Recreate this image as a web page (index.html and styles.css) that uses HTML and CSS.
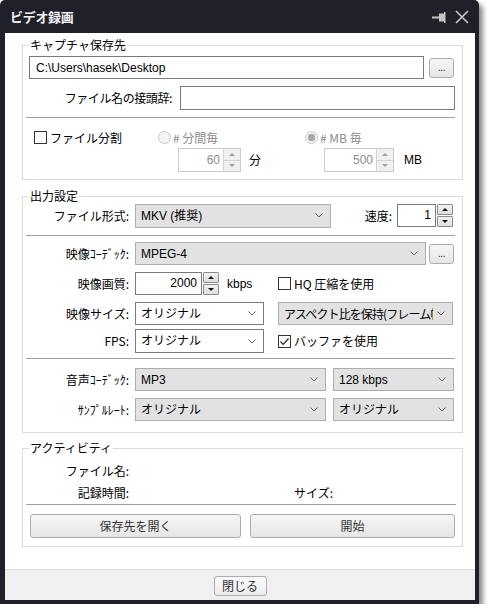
FILE: index.html
```html
<!DOCTYPE html>
<html lang="ja">
<head>
<meta charset="utf-8">
<title>ビデオ録画</title>
<link rel="stylesheet" href="styles.css">
</head>
<body>
<div class="window">
  <div class="titlebar">
    <span class="title">ビデオ録画</span>
    <div class="tb-icons">
      <svg class="pin" width="15" height="11" viewBox="0 0 15 11"><rect x="0" y="4.5" width="8" height="2" fill="#c4c4c4"/><rect x="7" y="1.5" width="5" height="8" fill="#c4c4c4"/><rect x="12" y="0" width="1.5" height="11" fill="#c4c4c4"/></svg>
      <svg class="xbtn" width="14" height="14" viewBox="0 0 14 14"><path d="M1 1 L13 13 M13 1 L1 13" stroke="#c8c8c8" stroke-width="1.6" fill="none"/></svg>
    </div>
  </div>
  <div class="client">
    <div class="group g1">
      <span class="legend">キャプチャ保存先</span>
      <div class="row r-path">
        <div class="textbox path">C:\Users\hasek\Desktop</div>
        <div class="btn dots">...</div>
      </div>
      <div class="row r-prefix">
        <span class="lbl-inline">ファイル名の接頭辞:</span>
        <div class="textbox prefix"></div>
      </div>
      <div class="sep"></div>
      <div class="row r-split">
        <div class="chk split"><span class="box"></span>ファイル分割</div>
        <div class="radio rmin"><span class="circ"></span># 分間毎</div>
        <div class="radio rmb"><span class="circ on"></span># MB 毎</div>
      </div>
      <div class="row r-spin">
        <div class="spinwrap">
          <div class="spin dis w60"><span class="val">60</span><span class="arrows"><span class="a up"><i class="tri-up"></i></span><span class="a dn"><i class="tri-dn"></i></span></span></div>
          <span class="unit">分</span>
        </div>
        <div class="spin dis w500"><span class="val">500</span><span class="arrows"><span class="a up"><i class="tri-up"></i></span><span class="a dn"><i class="tri-dn"></i></span></span></div>
        <span class="unit mb">MB</span>
      </div>
    </div>

    <div class="group g2">
      <span class="legend">出力設定</span>
      <div class="row r-fmt">
        <span class="lbl">ファイル形式:</span>
        <div class="combo gray w-fmt"><span class="ctext">MKV (推奨)</span><svg class="chev" width="8" height="5" viewBox="0 0 8 5"><polyline points="0.5,0.5 4,4 7.5,0.5" fill="none" stroke="#666" stroke-width="1"/></svg></div>
        <span class="speed-lbl">速度:</span>
        <div class="espin w-speed"><div class="etext">1</div><div class="earrows"><span class="eb"><i class="tri-up dark"></i></span><span class="eb"><i class="tri-dn dark"></i></span></div></div>
      </div>
      <div class="sep"></div>
      <div class="row r-codec">
        <span class="lbl">映像ｺｰﾃﾞｯｸ:</span>
        <div class="combo gray w-codec"><span class="ctext">MPEG-4</span><svg class="chev" width="8" height="5" viewBox="0 0 8 5"><polyline points="0.5,0.5 4,4 7.5,0.5" fill="none" stroke="#666" stroke-width="1"/></svg></div>
        <div class="btn dots codec-dots">...</div>
      </div>
      <div class="row r-quality">
        <span class="lbl">映像画質:</span>
        <div class="c1">
          <div class="espin w-q"><div class="etext">2000</div><div class="earrows"><span class="eb"><i class="tri-up dark"></i></span><span class="eb"><i class="tri-dn dark"></i></span></div></div>
          <span class="kbps">kbps</span>
        </div>
        <div class="chk"><span class="box"></span>HQ 圧縮を使用</div>
      </div>
      <div class="row r-size">
        <span class="lbl">映像サイズ:</span>
        <div class="combo white w-size"><span class="ctext">オリジナル</span><svg class="chev" width="8" height="5" viewBox="0 0 8 5"><polyline points="0.5,0.5 4,4 7.5,0.5" fill="none" stroke="#666" stroke-width="1"/></svg></div>
        <div class="combo gray w-aspect"><span class="ctext">アスペクト比を保持(フレーム幅</span><svg class="chev" width="8" height="5" viewBox="0 0 8 5"><polyline points="0.5,0.5 4,4 7.5,0.5" fill="none" stroke="#666" stroke-width="1"/></svg></div>
      </div>
      <div class="row r-fps">
        <span class="lbl">FPS:</span>
        <div class="combo white w-size"><span class="ctext">オリジナル</span><svg class="chev" width="8" height="5" viewBox="0 0 8 5"><polyline points="0.5,0.5 4,4 7.5,0.5" fill="none" stroke="#666" stroke-width="1"/></svg></div>
        <div class="chk buf"><span class="box checked"><svg width="11" height="11" viewBox="0 0 11 11"><polyline points="1.5,5.5 4.2,8.3 9.5,2.5" fill="none" stroke="#222" stroke-width="1.2"/></svg></span>バッファを使用</div>
      </div>
      <div class="sep s2"></div>
      <div class="row r-audio">
        <span class="lbl">音声ｺｰﾃﾞｯｸ:</span>
        <div class="combo gray w-audio"><span class="ctext">MP3</span><svg class="chev" width="8" height="5" viewBox="0 0 8 5"><polyline points="0.5,0.5 4,4 7.5,0.5" fill="none" stroke="#666" stroke-width="1"/></svg></div>
        <div class="combo gray w-rate"><span class="ctext">128 kbps</span><svg class="chev" width="8" height="5" viewBox="0 0 8 5"><polyline points="0.5,0.5 4,4 7.5,0.5" fill="none" stroke="#666" stroke-width="1"/></svg></div>
      </div>
      <div class="row r-sample">
        <span class="lbl">ｻﾝﾌﾟﾙﾚｰﾄ:</span>
        <div class="combo gray w-audio"><span class="ctext">オリジナル</span><svg class="chev" width="8" height="5" viewBox="0 0 8 5"><polyline points="0.5,0.5 4,4 7.5,0.5" fill="none" stroke="#666" stroke-width="1"/></svg></div>
        <div class="combo gray w-rate"><span class="ctext">オリジナル</span><svg class="chev" width="8" height="5" viewBox="0 0 8 5"><polyline points="0.5,0.5 4,4 7.5,0.5" fill="none" stroke="#666" stroke-width="1"/></svg></div>
      </div>
    </div>

    <div class="group g3">
      <span class="legend">アクティビティ</span>
      <div class="row r-info">
        <span class="lbl">ファイル名:</span>
      </div>
      <div class="row r-info">
        <span class="lbl">記録時間:</span>
        <span class="size-lbl">サイズ:</span>
      </div>
      <div class="sep s3"></div>
      <div class="row r-buttons">
        <div class="btn big open">保存先を開く</div>
        <div class="btn big start">開始</div>
      </div>
    </div>

    <div class="footer">
      <div class="btn close">閉じる</div>
    </div>
  </div>
</div>
</body>
</html>
```

FILE: styles.css
```css
* { box-sizing: border-box; }

html, body {
  margin: 0;
  padding: 0;
  background: #ffffff;
}

body {
  font-family: "Liberation Sans", "Noto Sans CJK JP", sans-serif;
  font-size: 12px;
  line-height: 16px;
  color: #000;
}

.window {
  width: 479px;
  height: 604px;
  background: #1f2029;
  border-radius: 5px 5px 0 0;
  box-shadow: 4px 4px 5px rgba(0, 0, 0, 0.45);
  display: flex;
  flex-direction: column;
}

.titlebar {
  height: 33px;
  display: flex;
  align-items: center;
  padding: 0 10px 0 10px;
}

.title {
  color: #f2f2f2;
  font-family: "Noto Sans CJK JP", sans-serif;
  font-weight: bold;
  font-size: 13px;
  letter-spacing: -0.3px;
}

.tb-icons {
  margin-left: auto;
  display: flex;
  align-items: center;
  gap: 8px;
}

.pin { margin-top: 1px; }

.client {
  margin-left: 5px;
  width: 470px;
  height: 567px;
  background: #fff;
  display: flex;
  flex-direction: column;
}

/* group boxes */
.group {
  position: relative;
  margin-left: 17px;
  width: 441px;
  border: 1px solid #dcdcdc;
  padding: 0 7px 0 6px;
}

.legend {
  position: absolute;
  top: -9px;
  left: 6px;
  padding: 0 1px;
  background: #fff;
  line-height: 16px;
  font-family: "Noto Sans CJK JP", sans-serif;
  font-size: 12px;
}

.g1 { margin-top: 12px; padding-top: 10px; padding-bottom: 7px; }
.g2 { margin-top: 16px; padding-top: 6px; padding-bottom: 11px; }
.g3 { margin-top: 15px; padding-top: 11px; padding-bottom: 8px; }

.row {
  display: flex;
  align-items: center;
}

.sep {
  height: 1px;
  background: #a0a0a0;
  margin-left: -3px;
}

/* inputs */
.textbox {
  border: 1px solid #7a7a7a;
  background: #fff;
  padding: 0 6px;
  display: flex;
  align-items: center;
  white-space: nowrap;
}

.btn {
  border: 1px solid #acacac;
  border-radius: 3px;
  background: linear-gradient(#f6f6f6, #e6e6e6);
  color: #333;
  display: flex;
  align-items: center;
  justify-content: center;
  font-family: "Noto Sans CJK JP", sans-serif;
}

.dots {
  width: 25px;
  height: 20px;
  font-size: 10px;
  line-height: 10px;
  padding-bottom: 2px;
  letter-spacing: -0.5px;
}

/* group 1 */
.r-path { height: 23px; }
.path { width: 395px; height: 23px; }
.r-path .dots { margin-left: 5px; }

.r-prefix { height: 24px; margin-top: 7px; justify-content: flex-end; }
.lbl-inline { margin-right: 8px; font-family: "Noto Sans CJK JP", sans-serif; letter-spacing: -0.4px; }
.prefix { width: 275px; height: 24px; }

.g1 .sep { margin-top: 7px; }

.r-split { height: 21px; margin-top: 9px; }

.chk, .radio {
  display: flex;
  align-items: center;
  font-family: "Noto Sans CJK JP", sans-serif;
  white-space: nowrap;
}

.box {
  width: 13px;
  height: 13px;
  border: 1px solid #333;
  background: #fff;
  margin-right: 3px;
  display: flex;
  align-items: center;
  justify-content: center;
}

.split { margin-left: 5px; width: 124px; }

.radio { color: #8d8d8d; }
.rmin { width: 147px; }

.circ {
  width: 13px;
  height: 13px;
  border-radius: 50%;
  border: 1px solid #c9c9c9;
  background: #f4f4f4;
  margin-right: 2px;
}

.circ.on {
  background: radial-gradient(circle, #a8a8a8 0, #a8a8a8 3.5px, #f4f4f4 4px);
}

.r-spin { height: 24px; padding-left: 149px; }
.spinwrap { width: 146px; display: flex; align-items: center; }

.unit { margin-left: 8px; font-family: "Noto Sans CJK JP", sans-serif; }
.unit.mb { margin-left: 10px; font-family: "Liberation Sans", sans-serif; }

.spin {
  height: 24px;
  display: flex;
  border: 1px solid #cccccc;
  background: #fff;
}

.spin.w60 { width: 63px; }
.spin.w500 { width: 70px; }

.spin .val {
  flex: 1;
  text-align: right;
  padding-right: 3px;
  color: #8d8d8d;
  line-height: 22px;
}

.spin .arrows {
  width: 17px;
  display: flex;
  flex-direction: column;
  border-left: 1px solid #d4d4d4;
  background: #f0f0f0;
}

.spin .a {
  flex: 1;
  display: flex;
  align-items: center;
  justify-content: center;
}

.spin .a.up { border-bottom: 1px solid #d4d4d4; }

.tri-up, .tri-dn {
  display: block;
  width: 0;
  height: 0;
  border-left: 3px solid transparent;
  border-right: 3px solid transparent;
}

.tri-up { border-bottom: 3px solid #a0a0a0; }
.tri-dn { border-top: 3px solid #a0a0a0; }
.tri-up.dark { border-bottom-color: #111; }
.tri-dn.dark { border-top-color: #111; }

/* group 2 */
.lbl {
  width: 100px;
  margin-right: 6px;
  text-align: right;
  font-family: "Noto Sans CJK JP", sans-serif;
  white-space: nowrap;
}

.combo {
  height: 23px;
  display: flex;
  align-items: center;
  padding: 0 7px 0 5px;
  white-space: nowrap;
  overflow: hidden;
  font-family: "Liberation Sans", "Noto Sans CJK JP", sans-serif;
}

.combo.gray { background: #e2e2e2; border: 1px solid #adadad; }
.combo.white { background: #fff; border: 1px solid #7a7a7a; }

.ctext { flex: 1; overflow: hidden; text-overflow: clip; }
.chev { flex: none; margin-left: 4px; }

.r-fmt { height: 25px; }
.w-fmt { width: 196px; height: 24px; }
.speed-lbl { margin-left: auto; margin-right: 5px; font-family: "Noto Sans CJK JP", sans-serif; }

.espin { display: flex; height: 23px; gap: 1px; }
.w-speed { width: 56px; margin-right: 2px; }
.w-q { width: 84px; }

.etext {
  flex: 1;
  border: 1px solid #7a7a7a;
  background: #fff;
  text-align: right;
  padding-right: 4px;
  line-height: 21px;
}

.earrows {
  width: 16px;
  display: flex;
  flex-direction: column;
  gap: 1px;
}

.eb {
  flex: 1;
  border: 1px solid #8c8c8c;
  border-radius: 1px;
  background: linear-gradient(#f2f2f2, #dedede);
  display: flex;
  align-items: center;
  justify-content: center;
}

.g2 .sep { margin-top: 7px; }
.r-codec { height: 23px; margin-top: 6px; }
.w-codec { width: 291px; }
.codec-dots { margin-left: 3px; }

.r-quality { height: 23px; margin-top: 7px; }
.c1 { width: 143px; display: flex; align-items: center; }
.kbps { margin-left: 8px; }

.r-size { height: 23px; margin-top: 7px; }
.w-size { width: 129px; }
.w-aspect { width: 175px; margin-left: 14px; font-family: "Noto Sans CJK JP", sans-serif; letter-spacing: -0.9px; }

.r-fps { height: 24px; margin-top: 4px; }
.r-fps .combo { height: 24px; }
.buf { margin-left: 14px; }

.g2 .sep.s2 { margin-top: 5px; }
.r-audio { height: 23px; margin-top: 9px; }
.r-sample { height: 23px; margin-top: 7px; }
.w-audio { width: 191px; }
.w-rate { width: 121px; margin-left: 7px; }

/* group 3 */
.r-info { height: 22px; }
.size-lbl {
  width: 198px;
  text-align: right;
  font-family: "Noto Sans CJK JP", sans-serif;
}

.sep.s3 { margin-top: 0; margin-right: -1px; }

.r-buttons { height: 24px; margin-top: 9px; }
.big { height: 24px; font-size: 12px; }
.open { width: 211px; margin-left: 1px; }
.start { width: 205px; margin-left: 9px; }

/* footer */
.footer {
  margin-top: auto;
  height: 31px;
  border-top: 1px solid #dfdfdf;
  background: #f0f0f0;
  display: flex;
  justify-content: center;
  padding-top: 6px;
}

.close {
  width: 53px;
  height: 20px;
  font-size: 12px;
  background: linear-gradient(#fbfbfb, #ececec);
}
```
